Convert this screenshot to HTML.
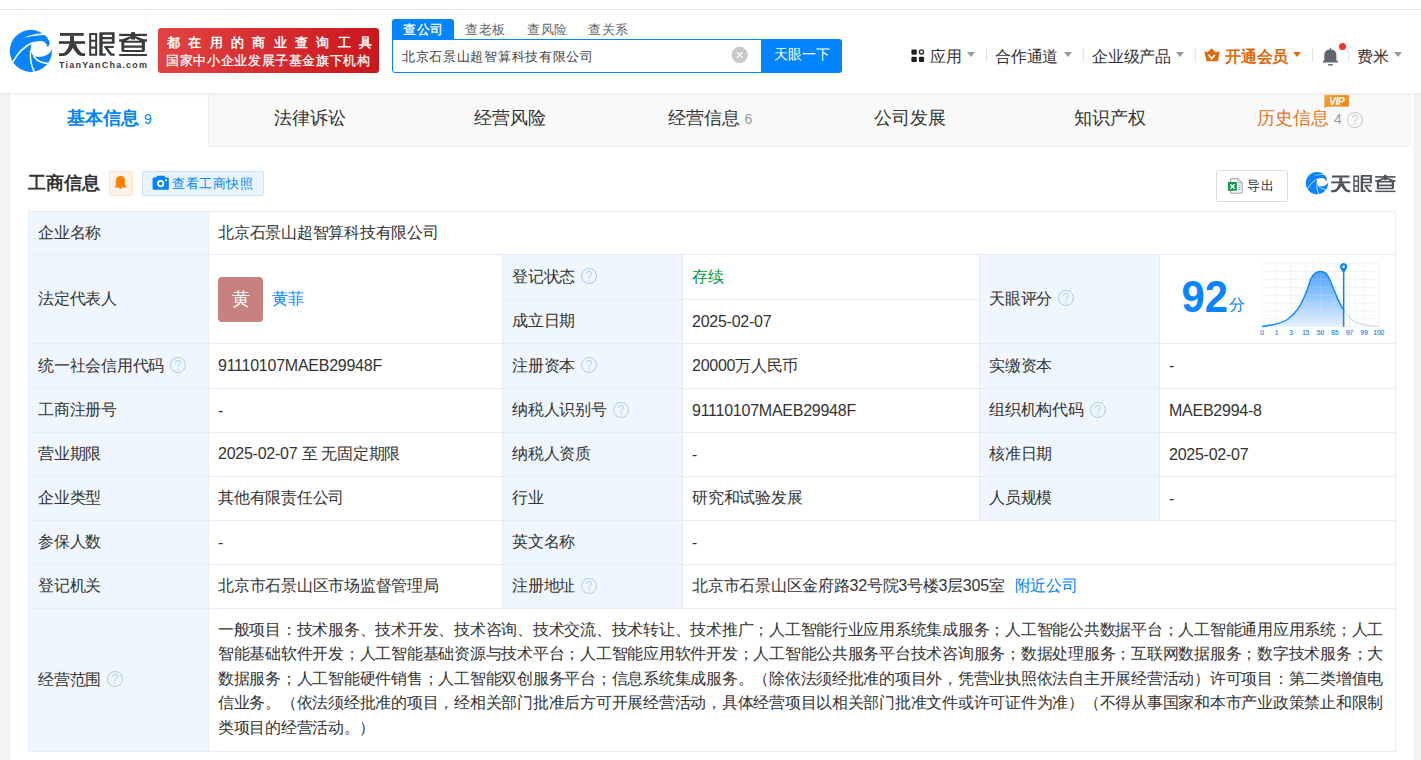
<!DOCTYPE html>
<html><head><meta charset="utf-8">
<style>
*{box-sizing:border-box;margin:0;padding:0}
html,body{width:1421px;height:760px;overflow:hidden}
body{position:relative;background:#f5f5f5;font-family:"Liberation Sans",sans-serif;color:#333}
.a{position:absolute;white-space:nowrap}
#hdr{position:absolute;left:0;top:0;width:1421px;height:93px;background:#fff;box-shadow:0 1px 4px rgba(0,0,0,.07);z-index:5}
#topline{position:absolute;left:0;top:9px;width:1421px;height:1px;background:#e3e3e3}
#card{position:absolute;left:9px;top:93px;width:1406px;height:667px;background:#fff;border-left:1px solid #ececec;border-right:1px solid #ececec}
#tabs{position:absolute;left:10px;top:93px;width:1401px;height:54px;background:#f9f9f9;border-bottom:1px solid #f1f1f1}
.tab{position:absolute;top:-1px;height:53px;font-size:18px;line-height:53px;color:#333;white-space:nowrap;text-align:center}
.num{font-size:14px;color:#999;margin-left:5px}
#tbl{position:absolute;left:28px;top:211px;width:1368px;height:541px;background:#e4edf6}
.c{position:absolute;background:#fff;font-size:16px;letter-spacing:-0.25px;color:#333;display:flex;align-items:center;padding-left:9px;white-space:nowrap}
.h{background:#eff6fd}
.q{display:inline-block;margin-left:6px;flex:none;position:relative;top:-1px}
.av{display:inline-block;width:45px;height:45px;border-radius:4px;background:#c98180;color:#fff;font-size:18px;line-height:45px;text-align:center;margin-right:9px}
.lk{color:#0084ff}
.scope{width:1165px;line-height:24.5px;white-space:normal;position:relative;top:-1px;letter-spacing:-0.3px}
.ln{text-align:justify;text-align-last:justify;height:24.5px;overflow:hidden}
.ln.last{text-align-last:left}
.nav{font-size:16px;letter-spacing:-0.25px;color:#333}
.caret{position:absolute;width:0;height:0;border-left:4px solid transparent;border-right:4px solid transparent;border-top:5px solid #999}
.sep{position:absolute;width:1px;height:13px;background:#dfe3ea}
</style></head><body>
<div id="hdr"><div id="topline"></div>
  <!-- logo -->
  <svg class="a" style="left:0;top:0" width="160" height="93" viewBox="0 0 160 93">
    <defs>
    <g id="lgicon">
      <circle cx="378" cy="378" r="348" fill="#0a84ff"/>
      <path d="M262 162 Q400 100 575 88 L640 110 Q440 118 262 162 Z" fill="#fff"/>
      <path d="M394 247 Q460 214 540 215 Q610 220 640 275 Q652 300 650 320 Q680 290 687 262 Q690 200 655 174 L700 150 L780 356 L723 356 Q700 400 687 414 Q660 440 624 456 Q590 472 546 476 Q500 478 431 469 Q385 430 375 360 Q375 290 394 247 Z" fill="#fff"/>
      <path d="M78 568 Q200 330 420 236" stroke="#fff" stroke-width="24" fill="none"/>
      <path d="M378 360 Q345 560 445 740" stroke="#fff" stroke-width="24" fill="none"/>
      <path d="M420 462 Q500 578 660 585" stroke="#fff" stroke-width="24" fill="none"/>
    </g>
    <g id="lgtext">
    <g transform="translate(56 28) scale(0.042105)">
      <rect x="95" y="118" width="565" height="68"/>
      <rect x="70" y="313" width="620" height="63"/>
      <rect x="333" y="185" width="94" height="140"/>
      <path d="M318 372 L430 372 Q405 505 300 605 Q240 667 170 667 L70 667 L70 598 L150 598 Q195 596 235 550 Q300 470 318 372 Z"/>
      <path d="M372 372 L470 372 Q505 480 575 560 Q608 598 640 598 L690 598 L690 667 L612 667 Q555 667 508 620 Q418 520 372 420 Z"/>
    </g>
    <g transform="translate(88 28) scale(0.042105)">
      <path fill-rule="evenodd" d="M28 118 H218 V662 H28 Z M76 167 V278 H170 V167 Z M76 327 V438 H170 V327 Z M76 490 V610 H170 V490 Z"/>
      <path fill-rule="evenodd" d="M300 98 H632 V372 H347 V608 H422 V662 H268 V130 Q268 98 300 98 Z M347 162 V213 H568 V162 Z M347 267 V323 H568 V267 Z"/>
      <rect x="388" y="426" width="226" height="48"/>
      <path d="M392 462 L452 448 Q522 558 572 608 L632 608 L632 662 L538 662 Q468 582 392 462 Z"/>
    </g>
    <g transform="translate(116 28) scale(0.042088)">
      <rect x="75" y="138" width="660" height="54"/>
      <rect x="358" y="98" width="94" height="177"/>
      <path d="M358 188 L452 188 L204 328 L75 328 L75 268 L148 268 Z"/>
      <path d="M452 188 L358 188 L606 328 L735 328 L735 268 L662 268 Z"/>
      <path fill-rule="evenodd" d="M128 300 H687 V520 Q687 572 635 572 H180 Q128 572 128 520 Z M197 348 V418 H613 V348 Z M197 470 V523 H613 V470 Z"/>
      <rect x="75" y="618" width="660" height="48"/>
    </g>
    </g>
    </defs>
    <use href="#lgicon" transform="translate(8 28) scale(0.060526)"/>
    <use href="#lgtext" fill="#3e3a3a"/>
  </svg>
  <div class="a" style="left:59px;top:60px;font-size:9px;font-weight:bold;color:#3e3a3a;letter-spacing:1.2px">TianYanCha.com</div>
  <!-- red banner -->
  <div class="a" style="left:158px;top:28px;width:221px;height:45px;border-radius:3px;background:linear-gradient(100deg,#e24343,#c9161d)"></div>
  <div class="a" style="left:167px;top:34px;font-size:13px;color:#fff;letter-spacing:8.35px;-webkit-text-stroke:0.45px #fff">都在用的商业查询工具</div>
  <div class="a" style="left:166px;top:52px;font-size:13px;color:#fff;letter-spacing:0.65px;-webkit-text-stroke:0.25px #fff">国家中小企业发展子基金旗下机构</div>
  <!-- search -->
  <div class="a" style="left:392px;top:19px;width:62px;height:21px;background:#0084ff;border-radius:3px 3px 0 0"></div>
  <div class="a" style="left:403px;top:21px;font-size:13px;letter-spacing:0.5px;color:#fff;-webkit-text-stroke:0.3px #fff">查公司</div>
  <div class="a" style="left:465px;top:21px;font-size:13px;letter-spacing:0.5px;color:#666">查老板</div>
  <div class="a" style="left:527px;top:21px;font-size:13px;letter-spacing:0.5px;color:#666">查风险</div>
  <div class="a" style="left:588px;top:21px;font-size:13px;letter-spacing:0.5px;color:#666">查关系</div>
  <div class="a" style="left:392px;top:39px;width:372px;height:34px;border:1px solid #0084ff;border-radius:0 0 0 3px;background:#fff"></div>
  <div class="a" style="left:402px;top:48px;font-size:13px;letter-spacing:0.7px;color:#444">北京石景山超智算科技有限公司</div>
  <svg class="a" style="left:731px;top:46px" width="18" height="18" viewBox="0 0 18 18"><circle cx="8.7" cy="8.9" r="8.1" fill="#c8c8c8"/><path d="M5.9 6.1 L11.5 11.7 M11.5 6.1 L5.9 11.7" stroke="#fff" stroke-width="1.3"/></svg>
  <div class="a" style="left:761px;top:39px;width:81px;height:34px;background:#0084ff;border-radius:0 3px 3px 0"></div>
  <div class="a" style="left:774px;top:46px;font-size:14px;color:#fff">天眼一下</div>
  <!-- nav -->
  <svg class="a" style="left:900px;top:40px" width="30" height="30" viewBox="900 40 30 30" fill="#1c1f24"><rect x="911.4" y="49.4" width="5.4" height="5.3" rx="1.1"/><circle cx="921.5" cy="52" r="2.05" fill="none" stroke="#1c1f24" stroke-width="1.3"/><rect x="911.4" y="56.8" width="5.4" height="5.2" rx="1.1"/><rect x="918.9" y="56.8" width="5.2" height="5.2" rx="1.1"/></svg>
  <div class="a nav" style="left:930px;top:47px">应用</div>
  <div class="caret" style="left:967px;top:52px"></div>
  <div class="sep" style="left:986px;top:49px"></div>
  <div class="a nav" style="left:995px;top:47px">合作通道</div>
  <div class="caret" style="left:1064px;top:52px"></div>
  <div class="sep" style="left:1083px;top:49px"></div>
  <div class="a nav" style="left:1092px;top:47px">企业级产品</div>
  <div class="caret" style="left:1176px;top:52px"></div>
  <div class="sep" style="left:1195px;top:49px"></div>
  <svg class="a" style="left:1200px;top:44px" width="24" height="22" viewBox="1200 44 24 22"><path d="M1204.3 50.9 L1207.4 52.6 L1211.6 48.2 L1215.7 52.6 L1219.7 50.9 L1218 61.2 L1206.6 61.2 Z" fill="#df6a0c"/><path d="M1208.5 54.8 L1211.6 58.6 L1214.9 54.8" stroke="#fff" stroke-width="1.7" fill="none"/></svg>
  <div class="a nav" style="left:1225px;top:47px;color:#e06a0e;font-weight:bold">开通会员</div>
  <div class="caret" style="left:1293px;top:52px;border-top-color:#e06a0e"></div>
  <div class="sep" style="left:1312px;top:49px"></div>
  <svg class="a" style="left:1318px;top:40px" width="30" height="30" viewBox="1318 40 30 30" fill="#5f6670"><rect x="1329.8" y="48" width="1.3" height="2"/><path d="M1324.3 61 V55 Q1324.3 49.4 1330.4 49.4 Q1336.4 49.4 1336.4 55 V61 Z"/><rect x="1323" y="60.8" width="14.9" height="1.7"/><rect x="1328.1" y="64.1" width="4.6" height="1.5"/></svg>
  <div class="a" style="left:1339px;top:43px;width:7px;height:7px;border-radius:50%;background:#fb3130"></div>
  <div class="sep" style="left:1348px;top:49px"></div>
  <div class="a nav" style="left:1357px;top:47px">费米</div>
  <div class="caret" style="left:1394px;top:52px"></div>
</div>
<div id="card"></div>
<div id="tabs">
  <div class="a" style="left:0;top:0;width:199px;height:54px;background:#fff;border-right:1px solid #eeeeee"></div>
  <div class="tab" style="left:0;width:199px;color:#0084ff;font-weight:bold">基本信息<span class="num" style="color:#0084ff;font-weight:normal">9</span></div>
  <div class="tab" style="left:200px;width:200px">法律诉讼</div>
  <div class="tab" style="left:400px;width:200px">经营风险</div>
  <div class="tab" style="left:600px;width:200px">经营信息<span class="num">6</span></div>
  <div class="tab" style="left:800px;width:200px">公司发展</div>
  <div class="tab" style="left:1000px;width:200px">知识产权</div>
  <div class="tab" style="left:1200px;width:200px;color:#e5761f">历史信息<span class="num">4</span><svg class="q" style="margin-left:5px;vertical-align:-2px;top:2px" width="16" height="16" viewBox="0 0 16 16"><circle cx="8" cy="8" r="7.5" fill="none" stroke="#c3c7ce"/><path d="M5.6 5.9 Q5.6 3.3 8.1 3.3 Q10.5 3.3 10.5 5.6 Q10.5 6.9 9.1 7.6 Q8.1 8.1 8.1 9.3 V10.3" fill="none" stroke="#c3c7ce" stroke-width="1"/><circle cx="8.1" cy="12.2" r="0.75" fill="#c3c7ce"/></svg></div>
</div>
<!-- section title -->
<div class="a" style="left:28px;top:171px;font-size:18px;font-weight:bold;color:#333">工商信息</div>
<div class="a" style="left:109px;top:171px;width:24px;height:25px;background:#fff3e9;border:1px solid #fde0c8;border-radius:2px"></div>
<svg class="a" style="left:108px;top:170px" width="26" height="26" viewBox="108 170 26 26" fill="#ff7f00"><path d="M115.9 186.4 V181 Q115.9 176 120.5 176 Q125.1 176 125.1 181 V186.4 Z"/><rect x="115" y="185.9" width="11.6" height="1.6" rx="0.6"/><path d="M118.9 187.3 H122.3 Q122.3 189 120.6 189 Q118.9 189 118.9 187.3 Z"/></svg>
<div class="a" style="left:142px;top:171px;width:122px;height:25px;background:#eaf4ff;border:1px solid #c9e1fb;border-radius:2px"></div>
<svg class="a" style="left:148px;top:172px" width="24" height="22" viewBox="148 172 24 22"><path d="M153.6 177.6 H156.2 L157.2 175.8 H164.3 L165.3 177.6 H167.8 Q168.8 177.6 168.8 178.6 V188.8 Q168.8 189.8 167.8 189.8 H153.6 Q152.6 189.8 152.6 188.8 V178.6 Q152.6 177.6 153.6 177.6 Z" fill="#0084ff"/><circle cx="160.7" cy="183.6" r="2.7" fill="none" stroke="#fff" stroke-width="1.8"/><circle cx="166.1" cy="180.3" r="1.1" fill="#fff"/></svg>
<div class="a" style="left:172px;top:175px;font-size:13px;letter-spacing:0.5px;color:#0084ff">查看工商快照</div>
<div class="a" style="left:1216px;top:170px;width:72px;height:32px;border:1px solid #dddddd;border-radius:2px;background:#fff"></div>
<svg class="a" style="left:1224px;top:174px" width="22" height="22" viewBox="1224 174 22 22"><path d="M1230.7 178.7 H1238.1 L1242.2 182.8 V193.2 H1230.7 Z" fill="#fff" stroke="#9a9ea5" stroke-width="1"/><path d="M1238.1 178.7 V182.8 H1242.2" fill="none" stroke="#9a9ea5" stroke-width="1"/><rect x="1238.2" y="184.9" width="2.6" height="1" fill="#9a9ea5"/><rect x="1238.2" y="187" width="2.6" height="1" fill="#9a9ea5"/><rect x="1238.2" y="189" width="2.6" height="1" fill="#9a9ea5"/><rect x="1228" y="182" width="8.9" height="8.8" fill="#0e9a48"/><path d="M1230.3 184.2 L1234.6 188.7 M1234.6 184.2 L1230.3 188.7" stroke="#fff" stroke-width="1.4"/></svg>
<div class="a" style="left:1247px;top:177px;font-size:13px;letter-spacing:0.5px;color:#333">导出</div>
<svg class="a" style="left:1290px;top:160px" width="120" height="40" viewBox="1290 160 120 40">
  <use href="#lgicon" transform="translate(1304.9 171.1) scale(0.0319)"/>
  <use href="#lgtext" fill="#4e5259" transform="translate(1288.2 151.76) scale(0.73 0.72)"/>
</svg>
<div id="tbl">
<div class="c h" style="left:1px;top:1px;width:179px;height:42px;">企业名称</div>
<div class="c " style="left:181px;top:1px;width:1186px;height:42px;">北京石景山超智算科技有限公司</div>
<div class="c h" style="left:1px;top:44px;width:179px;height:88px;">法定代表人</div>
<div class="c " style="left:181px;top:44px;width:293px;height:88px;"><span class="av">黄</span><span class="lk">黄菲</span></div>
<div class="c h" style="left:475px;top:44px;width:179px;height:44px;">登记状态<svg class="q" width="16" height="16" viewBox="0 0 16 16"><circle cx="8" cy="8" r="7.5" fill="none" stroke="#a9cdee"/><path d="M5.6 5.9 Q5.6 3.3 8.1 3.3 Q10.5 3.3 10.5 5.6 Q10.5 6.9 9.1 7.6 Q8.1 8.1 8.1 9.3 V10.3" fill="none" stroke="#a9cdee" stroke-width="1"/><circle cx="8.1" cy="12.2" r="0.75" fill="#a9cdee"/></svg></div>
<div class="c " style="left:655px;top:44px;width:296px;height:44px;"><span style="color:#009a44">存续</span></div>
<div class="c h" style="left:475px;top:89px;width:179px;height:43px;">成立日期</div>
<div class="c " style="left:655px;top:89px;width:296px;height:43px;">2025-02-07</div>
<div class="c h" style="left:952px;top:44px;width:179px;height:88px;">天眼评分<svg class="q" width="16" height="16" viewBox="0 0 16 16"><circle cx="8" cy="8" r="7.5" fill="none" stroke="#a9cdee"/><path d="M5.6 5.9 Q5.6 3.3 8.1 3.3 Q10.5 3.3 10.5 5.6 Q10.5 6.9 9.1 7.6 Q8.1 8.1 8.1 9.3 V10.3" fill="none" stroke="#a9cdee" stroke-width="1"/><circle cx="8.1" cy="12.2" r="0.75" fill="#a9cdee"/></svg></div>
<div class="c " style="left:1132px;top:44px;width:235px;height:88px;"></div>
<div class="c h" style="left:1px;top:133px;width:179px;height:44px;">统一社会信用代码<svg class="q" width="16" height="16" viewBox="0 0 16 16"><circle cx="8" cy="8" r="7.5" fill="none" stroke="#a9cdee"/><path d="M5.6 5.9 Q5.6 3.3 8.1 3.3 Q10.5 3.3 10.5 5.6 Q10.5 6.9 9.1 7.6 Q8.1 8.1 8.1 9.3 V10.3" fill="none" stroke="#a9cdee" stroke-width="1"/><circle cx="8.1" cy="12.2" r="0.75" fill="#a9cdee"/></svg></div>
<div class="c " style="left:181px;top:133px;width:293px;height:44px;">91110107MAEB29948F</div>
<div class="c h" style="left:475px;top:133px;width:179px;height:44px;">注册资本<svg class="q" width="16" height="16" viewBox="0 0 16 16"><circle cx="8" cy="8" r="7.5" fill="none" stroke="#a9cdee"/><path d="M5.6 5.9 Q5.6 3.3 8.1 3.3 Q10.5 3.3 10.5 5.6 Q10.5 6.9 9.1 7.6 Q8.1 8.1 8.1 9.3 V10.3" fill="none" stroke="#a9cdee" stroke-width="1"/><circle cx="8.1" cy="12.2" r="0.75" fill="#a9cdee"/></svg></div>
<div class="c " style="left:655px;top:133px;width:296px;height:44px;">20000万人民币</div>
<div class="c h" style="left:952px;top:133px;width:179px;height:44px;">实缴资本</div>
<div class="c " style="left:1132px;top:133px;width:235px;height:44px;">-</div>
<div class="c h" style="left:1px;top:178px;width:179px;height:43px;">工商注册号</div>
<div class="c " style="left:181px;top:178px;width:293px;height:43px;">-</div>
<div class="c h" style="left:475px;top:178px;width:179px;height:43px;">纳税人识别号<svg class="q" width="16" height="16" viewBox="0 0 16 16"><circle cx="8" cy="8" r="7.5" fill="none" stroke="#a9cdee"/><path d="M5.6 5.9 Q5.6 3.3 8.1 3.3 Q10.5 3.3 10.5 5.6 Q10.5 6.9 9.1 7.6 Q8.1 8.1 8.1 9.3 V10.3" fill="none" stroke="#a9cdee" stroke-width="1"/><circle cx="8.1" cy="12.2" r="0.75" fill="#a9cdee"/></svg></div>
<div class="c " style="left:655px;top:178px;width:296px;height:43px;">91110107MAEB29948F</div>
<div class="c h" style="left:952px;top:178px;width:179px;height:43px;">组织机构代码<svg class="q" width="16" height="16" viewBox="0 0 16 16"><circle cx="8" cy="8" r="7.5" fill="none" stroke="#a9cdee"/><path d="M5.6 5.9 Q5.6 3.3 8.1 3.3 Q10.5 3.3 10.5 5.6 Q10.5 6.9 9.1 7.6 Q8.1 8.1 8.1 9.3 V10.3" fill="none" stroke="#a9cdee" stroke-width="1"/><circle cx="8.1" cy="12.2" r="0.75" fill="#a9cdee"/></svg></div>
<div class="c " style="left:1132px;top:178px;width:235px;height:43px;">MAEB2994-8</div>
<div class="c h" style="left:1px;top:222px;width:179px;height:43px;">营业期限</div>
<div class="c " style="left:181px;top:222px;width:293px;height:43px;">2025-02-07 至 无固定期限</div>
<div class="c h" style="left:475px;top:222px;width:179px;height:43px;">纳税人资质</div>
<div class="c " style="left:655px;top:222px;width:296px;height:43px;">-</div>
<div class="c h" style="left:952px;top:222px;width:179px;height:43px;">核准日期</div>
<div class="c " style="left:1132px;top:222px;width:235px;height:43px;">2025-02-07</div>
<div class="c h" style="left:1px;top:266px;width:179px;height:43px;">企业类型</div>
<div class="c " style="left:181px;top:266px;width:293px;height:43px;">其他有限责任公司</div>
<div class="c h" style="left:475px;top:266px;width:179px;height:43px;">行业</div>
<div class="c " style="left:655px;top:266px;width:296px;height:43px;">研究和试验发展</div>
<div class="c h" style="left:952px;top:266px;width:179px;height:43px;">人员规模</div>
<div class="c " style="left:1132px;top:266px;width:235px;height:43px;">-</div>
<div class="c h" style="left:1px;top:310px;width:179px;height:43px;">参保人数</div>
<div class="c " style="left:181px;top:310px;width:293px;height:43px;">-</div>
<div class="c h" style="left:475px;top:310px;width:179px;height:43px;">英文名称</div>
<div class="c " style="left:655px;top:310px;width:712px;height:43px;">-</div>
<div class="c h" style="left:1px;top:354px;width:179px;height:43px;">登记机关</div>
<div class="c " style="left:181px;top:354px;width:293px;height:43px;">北京市石景山区市场监督管理局</div>
<div class="c h" style="left:475px;top:354px;width:179px;height:43px;">注册地址<svg class="q" width="16" height="16" viewBox="0 0 16 16"><circle cx="8" cy="8" r="7.5" fill="none" stroke="#a9cdee"/><path d="M5.6 5.9 Q5.6 3.3 8.1 3.3 Q10.5 3.3 10.5 5.6 Q10.5 6.9 9.1 7.6 Q8.1 8.1 8.1 9.3 V10.3" fill="none" stroke="#a9cdee" stroke-width="1"/><circle cx="8.1" cy="12.2" r="0.75" fill="#a9cdee"/></svg></div>
<div class="c " style="left:655px;top:354px;width:712px;height:43px;">北京市石景山区金府路32号院3号楼3层305室<span class="lk" style="margin-left:10px">附近公司</span></div>
<div class="c h" style="left:1px;top:398px;width:179px;height:142px;">经营范围<svg class="q" width="16" height="16" viewBox="0 0 16 16"><circle cx="8" cy="8" r="7.5" fill="none" stroke="#a9cdee"/><path d="M5.6 5.9 Q5.6 3.3 8.1 3.3 Q10.5 3.3 10.5 5.6 Q10.5 6.9 9.1 7.6 Q8.1 8.1 8.1 9.3 V10.3" fill="none" stroke="#a9cdee" stroke-width="1"/><circle cx="8.1" cy="12.2" r="0.75" fill="#a9cdee"/></svg></div>
<div class="c " style="left:181px;top:398px;width:1186px;height:142px;"><div class="scope"><div class="ln">一般项目：技术服务、技术开发、技术咨询、技术交流、技术转让、技术推广；人工智能行业应用系统集成服务；人工智能公共数据平台；人工智能通用应用系统；人工</div><div class="ln">智能基础软件开发；人工智能基础资源与技术平台；人工智能应用软件开发；人工智能公共服务平台技术咨询服务；数据处理服务；互联网数据服务；数字技术服务；大</div><div class="ln">数据服务；人工智能硬件销售；人工智能双创服务平台；信息系统集成服务。（除依法须经批准的项目外，凭营业执照依法自主开展经营活动）许可项目：第二类增值电</div><div class="ln">信业务。（依法须经批准的项目，经相关部门批准后方可开展经营活动，具体经营项目以相关部门批准文件或许可证件为准）（不得从事国家和本市产业政策禁止和限制</div><div class="ln last">类项目的经营活动。）</div></div></div>

</div>
<svg class="a" style="left:1160px;top:255px;z-index:2" width="235" height="88" viewBox="1160 255 235 88">
<defs><linearGradient id="gf" x1="0" y1="0" x2="0" y2="1"><stop offset="0" stop-color="#4fa3ff"/><stop offset="1" stop-color="#e4f0fd"/></linearGradient>
<clipPath id="cl"><rect x="1255" y="255" width="88.6" height="80"/></clipPath>
<clipPath id="cr"><rect x="1343.6" y="255" width="60" height="80"/></clipPath></defs>
<g stroke="#ecf3fb" stroke-width="1"><line x1="1262" y1="263.4" x2="1262" y2="326.5"/><line x1="1276.6" y1="263.4" x2="1276.6" y2="326.5"/><line x1="1291.2" y1="263.4" x2="1291.2" y2="326.5"/><line x1="1305.8" y1="263.4" x2="1305.8" y2="326.5"/><line x1="1320.4" y1="263.4" x2="1320.4" y2="326.5"/><line x1="1335" y1="263.4" x2="1335" y2="326.5"/><line x1="1349.6" y1="263.4" x2="1349.6" y2="326.5"/><line x1="1364.2" y1="263.4" x2="1364.2" y2="326.5"/><line x1="1378.8" y1="263.4" x2="1378.8" y2="326.5"/><line x1="1262" y1="263.4" x2="1378.8" y2="263.4"/><line x1="1262" y1="271.5" x2="1378.8" y2="271.5"/><line x1="1262" y1="279.6" x2="1378.8" y2="279.6"/><line x1="1262" y1="287.6" x2="1378.8" y2="287.6"/><line x1="1262" y1="295.6" x2="1378.8" y2="295.6"/><line x1="1262" y1="303.3" x2="1378.8" y2="303.3"/><line x1="1262" y1="310.9" x2="1378.8" y2="310.9"/><line x1="1262" y1="318.6" x2="1378.8" y2="318.6"/><line x1="1262" y1="326.5" x2="1378.8" y2="326.5"/></g>
<path d="M1262.0 326.5 C1264.4 326.1 1272.4 325.0 1276.6 323.8 C1280.8 322.6 1283.8 322.0 1287.4 319.5 C1291.0 317.0 1295.0 313.0 1298.1 308.7 C1301.1 304.4 1303.5 298.6 1305.7 293.6 C1307.9 288.6 1309.5 281.9 1311.1 278.5 C1312.7 275.1 1313.8 274.3 1315.4 273.1 C1317.0 271.9 1318.8 271.5 1320.5 271.5 C1322.2 271.5 1324.2 272.1 1325.6 273.1 C1327.0 274.1 1327.5 275.0 1328.8 277.5 C1330.1 280.0 1331.6 284.3 1333.3 288.2 C1335.0 292.1 1337.0 297.5 1338.7 301.1 C1340.4 304.7 1341.6 306.9 1343.6 309.8 C1345.6 312.7 1347.8 316.1 1350.6 318.4 C1353.4 320.7 1355.6 322.4 1360.3 323.8 C1365.0 325.2 1375.5 326.1 1378.6 326.5 L1378.6 326.5 L1262 326.5 Z" fill="url(#gf)" clip-path="url(#cl)"/>
<g stroke="#ffffff" stroke-opacity="0.12" stroke-width="1"><line x1="1262" y1="263.4" x2="1262" y2="326.5"/><line x1="1276.6" y1="263.4" x2="1276.6" y2="326.5"/><line x1="1291.2" y1="263.4" x2="1291.2" y2="326.5"/><line x1="1305.8" y1="263.4" x2="1305.8" y2="326.5"/><line x1="1320.4" y1="263.4" x2="1320.4" y2="326.5"/><line x1="1335" y1="263.4" x2="1335" y2="326.5"/><line x1="1349.6" y1="263.4" x2="1349.6" y2="326.5"/><line x1="1364.2" y1="263.4" x2="1364.2" y2="326.5"/><line x1="1378.8" y1="263.4" x2="1378.8" y2="326.5"/><line x1="1262" y1="263.4" x2="1378.8" y2="263.4"/><line x1="1262" y1="271.5" x2="1378.8" y2="271.5"/><line x1="1262" y1="279.6" x2="1378.8" y2="279.6"/><line x1="1262" y1="287.6" x2="1378.8" y2="287.6"/><line x1="1262" y1="295.6" x2="1378.8" y2="295.6"/><line x1="1262" y1="303.3" x2="1378.8" y2="303.3"/><line x1="1262" y1="310.9" x2="1378.8" y2="310.9"/><line x1="1262" y1="318.6" x2="1378.8" y2="318.6"/><line x1="1262" y1="326.5" x2="1378.8" y2="326.5"/></g>
<path d="M1262.0 326.5 C1264.4 326.1 1272.4 325.0 1276.6 323.8 C1280.8 322.6 1283.8 322.0 1287.4 319.5 C1291.0 317.0 1295.0 313.0 1298.1 308.7 C1301.1 304.4 1303.5 298.6 1305.7 293.6 C1307.9 288.6 1309.5 281.9 1311.1 278.5 C1312.7 275.1 1313.8 274.3 1315.4 273.1 C1317.0 271.9 1318.8 271.5 1320.5 271.5 C1322.2 271.5 1324.2 272.1 1325.6 273.1 C1327.0 274.1 1327.5 275.0 1328.8 277.5 C1330.1 280.0 1331.6 284.3 1333.3 288.2 C1335.0 292.1 1337.0 297.5 1338.7 301.1 C1340.4 304.7 1341.6 306.9 1343.6 309.8 C1345.6 312.7 1347.8 316.1 1350.6 318.4 C1353.4 320.7 1355.6 322.4 1360.3 323.8 C1365.0 325.2 1375.5 326.1 1378.6 326.5" fill="none" stroke="#0a84ff" stroke-width="1.4" clip-path="url(#cl)"/>
<path d="M1262.0 326.5 C1264.4 326.1 1272.4 325.0 1276.6 323.8 C1280.8 322.6 1283.8 322.0 1287.4 319.5 C1291.0 317.0 1295.0 313.0 1298.1 308.7 C1301.1 304.4 1303.5 298.6 1305.7 293.6 C1307.9 288.6 1309.5 281.9 1311.1 278.5 C1312.7 275.1 1313.8 274.3 1315.4 273.1 C1317.0 271.9 1318.8 271.5 1320.5 271.5 C1322.2 271.5 1324.2 272.1 1325.6 273.1 C1327.0 274.1 1327.5 275.0 1328.8 277.5 C1330.1 280.0 1331.6 284.3 1333.3 288.2 C1335.0 292.1 1337.0 297.5 1338.7 301.1 C1340.4 304.7 1341.6 306.9 1343.6 309.8 C1345.6 312.7 1347.8 316.1 1350.6 318.4 C1353.4 320.7 1355.6 322.4 1360.3 323.8 C1365.0 325.2 1375.5 326.1 1378.6 326.5" fill="none" stroke="#c9d1db" stroke-width="1" clip-path="url(#cr)"/>
<rect x="1342.9" y="270" width="1.5" height="56.8" fill="#0a84ff"/>
<path d="M1343.6 273.2 L1340.6 268.8 A3.6 3.6 0 1 1 1346.6 268.8 Z" fill="#0a84ff"/>
<circle cx="1343.6" cy="266.7" r="1.3" fill="#fff"/>
<g font-family="Liberation Sans" font-size="6.6" fill="#2a86ec" stroke="#2a86ec" stroke-width="0.15" text-anchor="middle"><text x="1262" y="334.6">0</text><text x="1276.6" y="334.6">1</text><text x="1291.2" y="334.6">3</text><text x="1305.8" y="334.6">15</text><text x="1320.4" y="334.6">50</text><text x="1335" y="334.6">85</text><text x="1349.6" y="334.6">97</text><text x="1364.2" y="334.6">99</text><text x="1378.8" y="334.6">100</text></g>
<text x="0" y="0" transform="translate(1181.5 312) scale(0.93 1)" font-family="Liberation Sans" font-weight="bold" font-size="45" fill="#0a84ff">92</text>
</svg>
<div class="a" style="left:1229px;top:295px;font-size:16px;color:#0a84ff">分</div>
<svg class="a" style="left:1320px;top:92px" width="32" height="20" viewBox="1320 92 32 20"><defs><linearGradient id="vg" x1="0" y1="0" x2="1" y2="1"><stop offset="0" stop-color="#f7a233"/><stop offset="1" stop-color="#f57e0a"/></linearGradient></defs><path d="M1325 94.6 H1348.2 Q1349.3 94.6 1349.3 95.7 V105.9 Q1349.3 107 1348.2 107 H1327 L1324 109.2 V95.6 Q1324 94.6 1325 94.6 Z" fill="url(#vg)" stroke="#fff" stroke-width="0.8"/><text x="1336.6" y="105" font-family="Liberation Sans" font-weight="bold" font-style="italic" font-size="10.5" fill="#fff" text-anchor="middle" letter-spacing="-0.6">VIP</text></svg>
</body></html>
